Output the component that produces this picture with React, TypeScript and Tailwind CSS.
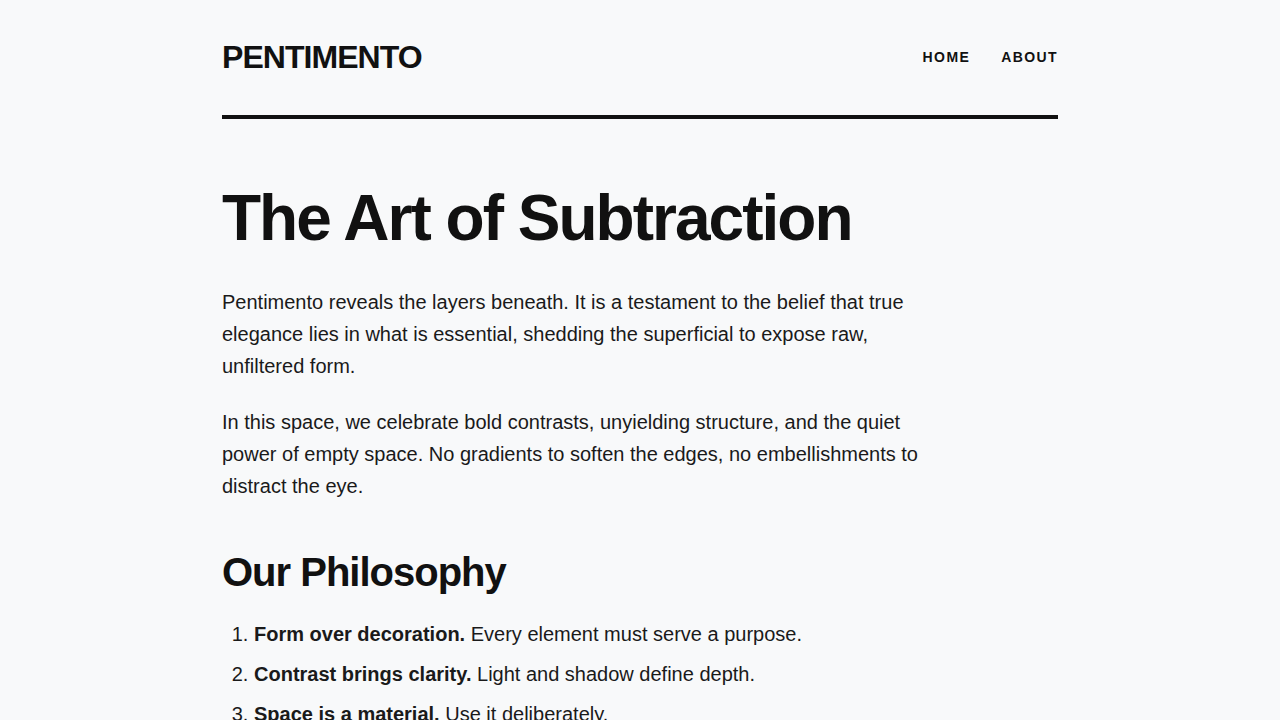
const principles = [
  { lead: 'Form over decoration.', rest: 'Every element must serve a purpose.' },
  { lead: 'Contrast brings clarity.', rest: 'Light and shadow define depth.' },
  { lead: 'Space is a material.', rest: 'Use it deliberately.' },
];

export default function App() {
  return (
    <div className="min-h-screen bg-[#f8f9fa] text-[#111111] font-['Liberation_Sans',Arial,sans-serif]">
      <div className="mx-auto w-[836px]">
        <header className="flex items-center justify-between border-b-4 border-[#111111] pt-10 pb-[41px]">
          <a href="#" className="text-[32px] leading-[34px] font-bold tracking-[-0.03em]">
            PENTIMENTO
          </a>
          <nav className="flex items-center gap-[31px] text-[14px] leading-[34px] font-bold uppercase tracking-[0.1em]">
            <a href="#">Home</a>
            <a href="#">About</a>
          </nav>
        </header>

        <main className="pt-16 pb-24">
          <h1 className="mb-[33px] text-[64px] leading-[1.1] font-bold tracking-[-0.031em]">
            The Art of Subtraction
          </h1>

          <div className="max-w-[720px] text-[20px] leading-[32px] text-[#1a1a1a]">
            <p className="mb-6">
              Pentimento reveals the layers beneath. It is a testament to the belief that true
              elegance lies in what is essential, shedding the superficial to expose raw,
              unfiltered form.
            </p>
            <p className="mb-[46px]">
              In this space, we celebrate bold contrasts, unyielding structure, and the quiet power
              of empty space. No gradients to soften the edges, no embellishments to distract the
              eye.
            </p>

            <h2 className="mb-[22px] text-[40px] leading-[48px] font-bold tracking-tight text-[#111111]">
              Our Philosophy
            </h2>

            <ol className="list-decimal pl-8">
              {principles.map((p) => (
                <li key={p.lead} className="mb-2">
                  <strong className="font-bold">{p.lead}</strong> {p.rest}
                </li>
              ))}
            </ol>
          </div>
        </main>
      </div>
    </div>
  );
}
